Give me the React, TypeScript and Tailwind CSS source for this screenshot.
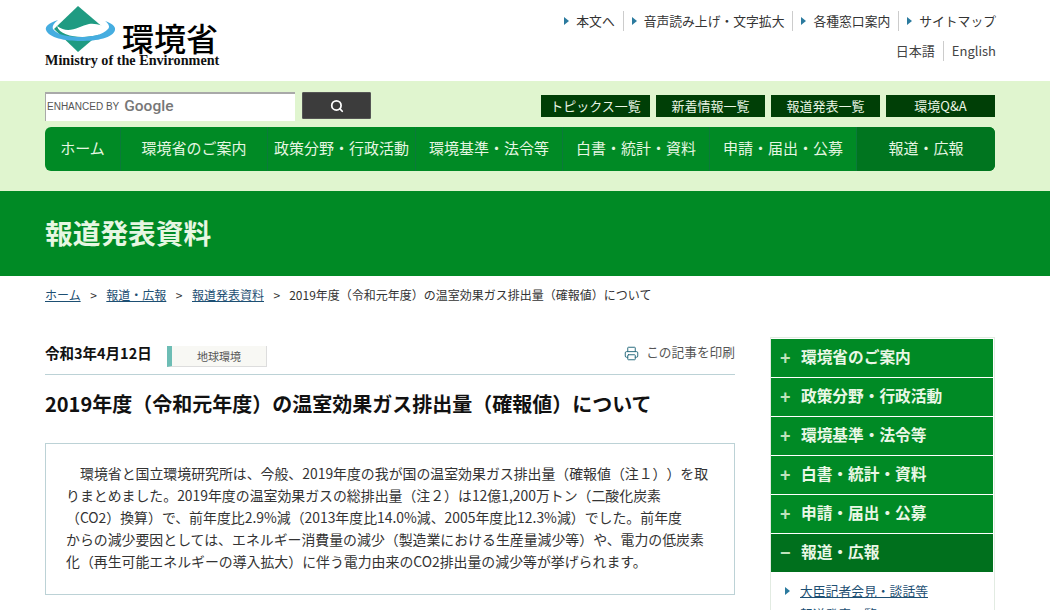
import { Printer, Search } from 'lucide-react';

const FONT = "font-['Noto_Sans_CJK_JP','Noto_Sans',sans-serif]";

const UTILITY_LINKS = ['本文へ', '音声読み上げ・文字拡大', '各種窓口案内', 'サイトマップ'];
const TOPIC_LINKS = ['トピックス一覧', '新着情報一覧', '報道発表一覧', '環境Q&A'];

const NAV_ITEMS = [
  { label: 'ホーム', width: 'w-[76px]' },
  { label: '環境省のご案内', width: 'w-[147px]' },
  { label: '政策分野・行政活動', width: 'w-[148px]' },
  { label: '環境基準・法令等', width: 'w-[147px]' },
  { label: '白書・統計・資料', width: 'w-[147px]' },
  { label: '申請・届出・公募', width: 'w-[147px]' },
];

const SIDE_ITEMS = ['環境省のご案内', '政策分野・行政活動', '環境基準・法令等', '白書・統計・資料', '申請・届出・公募'];

function Logo() {
  return (
    <div className="relative h-[69px] w-[176px]">
      <svg className="absolute left-0 top-[4px]" width="72" height="48" viewBox="0 0 72 48">
        <path d="M33 1 L60 24 L33 47 L9 24 Z" fill="#1f9b82" />
        <path d="M12 21 C24 30 34 21 44 19 C52 18 58 21 65 24 C56 34 16 36 12 21 Z" fill="#ffffff" />
        <path d="M13 15 C3 18 0 22 1 25 C4 33 20 36 36 36 C52 36 68 33 70 25 C71 21 66 18 60 16 C64 19 65 22 63 24 C58 30 46 32 36 32 C24 32 12 30 8 24 C7 21 9 18 13 15 Z" fill="#45ade0" />
      </svg>
      <span className={`absolute left-[77px] top-[20px] text-[32px] font-medium leading-[32px] text-black ${FONT}`}>環境省</span>
      <span className="absolute left-0 top-[51px] whitespace-nowrap font-['Liberation_Serif',serif] text-[14.2px] font-bold leading-[16px] text-[#111]">
        Ministry of the Environment
      </span>
    </div>
  );
}

function Triangle() {
  return <span className="mr-[7px] inline-block h-0 w-0 border-y-[4px] border-l-[5px] border-y-transparent border-l-[#2b7a9e]" />;
}

function Header() {
  return (
    <header className="flex h-[81px] justify-between pl-[45px] pr-[54px]">
      <div className="pt-[1px]">
        <Logo />
      </div>
      <div className="flex flex-col items-end pt-[11px]">
        <ul className="flex text-[12.8px] leading-[20px] text-[#333]">
          {UTILITY_LINKS.map((link, i) => (
            <li key={link} className={`flex items-center ${i > 0 ? 'ml-[8px] border-l border-[#ccc] pl-[8px]' : ''}`}>
              <Triangle />
              {link}
            </li>
          ))}
        </ul>
        <div className="mt-[10px] flex text-[13px] leading-[20px] text-[#444]">
          <span className="border-r border-[#ccc] pr-[8px]">日本語</span>
          <span className="pl-[8px]">English</span>
        </div>
      </div>
    </header>
  );
}

function SearchRow() {
  return (
    <div className="flex h-[46px] justify-between pt-[11px]">
      <div className="flex">
        <div className="flex h-[29px] w-[250px] items-center border-l border-t-2 border-[#a9a9a9] bg-white pb-[2px] pl-[1px]">
          <span className="font-['Liberation_Sans',sans-serif] text-[10px] text-[#555]">ENHANCED BY</span>
          <span className="ml-[5px] font-['Roboto',sans-serif] text-[15.5px] font-medium text-[#777]">Google</span>
        </div>
        <button className="ml-[7px] flex h-[27px] w-[69px] items-center justify-center rounded-[1px] border border-[#555] bg-[#3c3c3c]">
          <Search size={14} strokeWidth={3} className="text-white" />
        </button>
      </div>
      <div className="flex gap-[6px] pt-[3px]">
        {TOPIC_LINKS.map((link) => (
          <a key={link} className="flex h-[22px] w-[109px] items-center justify-center bg-[#003f06] text-[13px] text-[#e9f5e4]">
            {link}
          </a>
        ))}
      </div>
    </div>
  );
}

function GlobalNav() {
  return (
    <nav className="flex h-[44px] overflow-hidden rounded-[6px] bg-[#008a25] text-[15px] text-[#e6f7e2]">
      {NAV_ITEMS.map((item) => (
        <a key={item.label} className={`flex items-center justify-center whitespace-nowrap border-r border-[#0b7a3a] pb-[2px] ${item.width}`}>
          {item.label}
        </a>
      ))}
      <a className="flex flex-1 items-center justify-center bg-[#00751f] pb-[2px]">報道・広報</a>
    </nav>
  );
}

function Breadcrumb() {
  const linkClass = 'text-[#1d4f73] underline';
  return (
    <div className="flex h-[38px] items-center pb-[1px] pl-[45px] text-[12px] text-[#333]">
      <a className={linkClass}>ホーム</a>
      <span className="mx-[9.5px]">&gt;</span>
      <a className={linkClass}>報道・広報</a>
      <span className="mx-[9.5px]">&gt;</span>
      <a className={linkClass}>報道発表資料</a>
      <span className="ml-[9.5px] mr-[9px]">&gt;</span>
      <span className="[text-spacing-trim:space-all]">2019年度（令和元年度）の温室効果ガス排出量（確報値）について</span>
    </div>
  );
}

function Article() {
  return (
    <main className="w-[690px] [text-spacing-trim:space-all]">
      <div className="flex h-[38px] items-start justify-between border-b border-[#bcd2d6] pt-[6px]">
        <div className="flex items-start">
          <span className="w-[122px] text-[14.5px] font-bold leading-[20px] text-[#111]">令和3年4月12日</span>
          <span className="mt-[3px] flex h-[21px] w-[100px] items-center justify-center border-b border-r border-[#ddd] border-l-[5px] border-l-[#6dbdb5] bg-[#f8f8f4] text-[11px] text-[#555]">
            地球環境
          </span>
        </div>
        <div className="flex items-center text-[12.7px] leading-[18px] text-[#555]">
          <Printer size={15} strokeWidth={1.6} className="mr-[7px] mt-[2px] text-[#2d6f80]" />
          この記事を印刷
        </div>
      </div>
      <h1 className="mt-[13px] text-[20px] font-bold leading-[32px] text-[#111]">
        2019年度（令和元年度）の温室効果ガス排出量（確報値）について
      </h1>
      <div className="mt-[23px] border border-[#bcd2d6] px-[20px] pb-[22px] pt-[18px] text-[13.9px] leading-[22px] text-[#333]">
        <p className="indent-[14px]">
          環境省と国立環境研究所は、今般、2019年度の我が国の温室効果ガス排出量（確報値（注１））を取<br />
          りまとめました。2019年度の温室効果ガスの総排出量（注２）は12億1,200万トン（二酸化炭素<br />
          （CO2）換算）で、前年度比2.9%減（2013年度比14.0%減、2005年度比12.3%減）でした。前年度<br />
          からの減少要因としては、エネルギー消費量の減少（製造業における生産量減少等）や、電力の低炭素<br />
          化（再生可能エネルギーの導入拡大）に伴う電力由来のCO2排出量の減少等が挙げられます。
        </p>
      </div>
    </main>
  );
}

function SideMenu() {
  return (
    <aside className="w-[225px] border border-[#e2ebe2] pr-[1px] pt-[1px]">
      {SIDE_ITEMS.map((item) => (
        <div key={item} className="mb-[1px] flex h-[38px] items-center bg-[#008a25] pb-[2px] pl-[9px] text-[15.7px] font-bold text-[#eaf7e6]">
          <span className="mr-[11px] mt-[2px] w-[10px] text-center font-['Liberation_Sans',sans-serif] text-[18px] font-bold text-[#bfe3bc]">+</span>
          {item}
        </div>
      ))}
      <div className="flex h-[38px] items-center bg-[#00701d] pb-[2px] pl-[9px] text-[15.7px] font-bold text-[#eaf7e6]">
        <span className="mr-[11px] mt-[2px] w-[10px] text-center font-['Liberation_Sans',sans-serif] text-[18px] font-bold text-[#bfe3bc]">−</span>
        報道・広報
      </div>
      <ul className="px-[14px] pt-[9px] text-[12.8px] leading-[19px] text-[#1d4f73]">
        <li className="flex items-center">
          <Triangle />
          <a className="ml-[3px] underline">大臣記者会見・談話等</a>
        </li>
        <li className="mt-[4px] flex items-center">
          <Triangle />
          <a className="ml-[3px] underline">報道発表一覧</a>
        </li>
      </ul>
    </aside>
  );
}

export default function App() {
  return (
    <div className={`h-[610px] w-[1050px] overflow-hidden bg-white ${FONT}`}>
      <Header />
      <div className="h-[110px] bg-[#e0f5cf] pl-[45px] pr-[55px]">
        <SearchRow />
        <GlobalNav />
      </div>
      <div className="flex h-[85px] items-center bg-[#008a25] pb-[2px] pl-[45px] pr-[55px]">
        <h2 className="text-[27.7px] font-bold text-[#e6f7e2]">報道発表資料</h2>
      </div>
      <Breadcrumb />
      <div className="flex justify-between pl-[45px] pr-[55px] pt-[23px]">
        <Article />
        <SideMenu />
      </div>
    </div>
  );
}
